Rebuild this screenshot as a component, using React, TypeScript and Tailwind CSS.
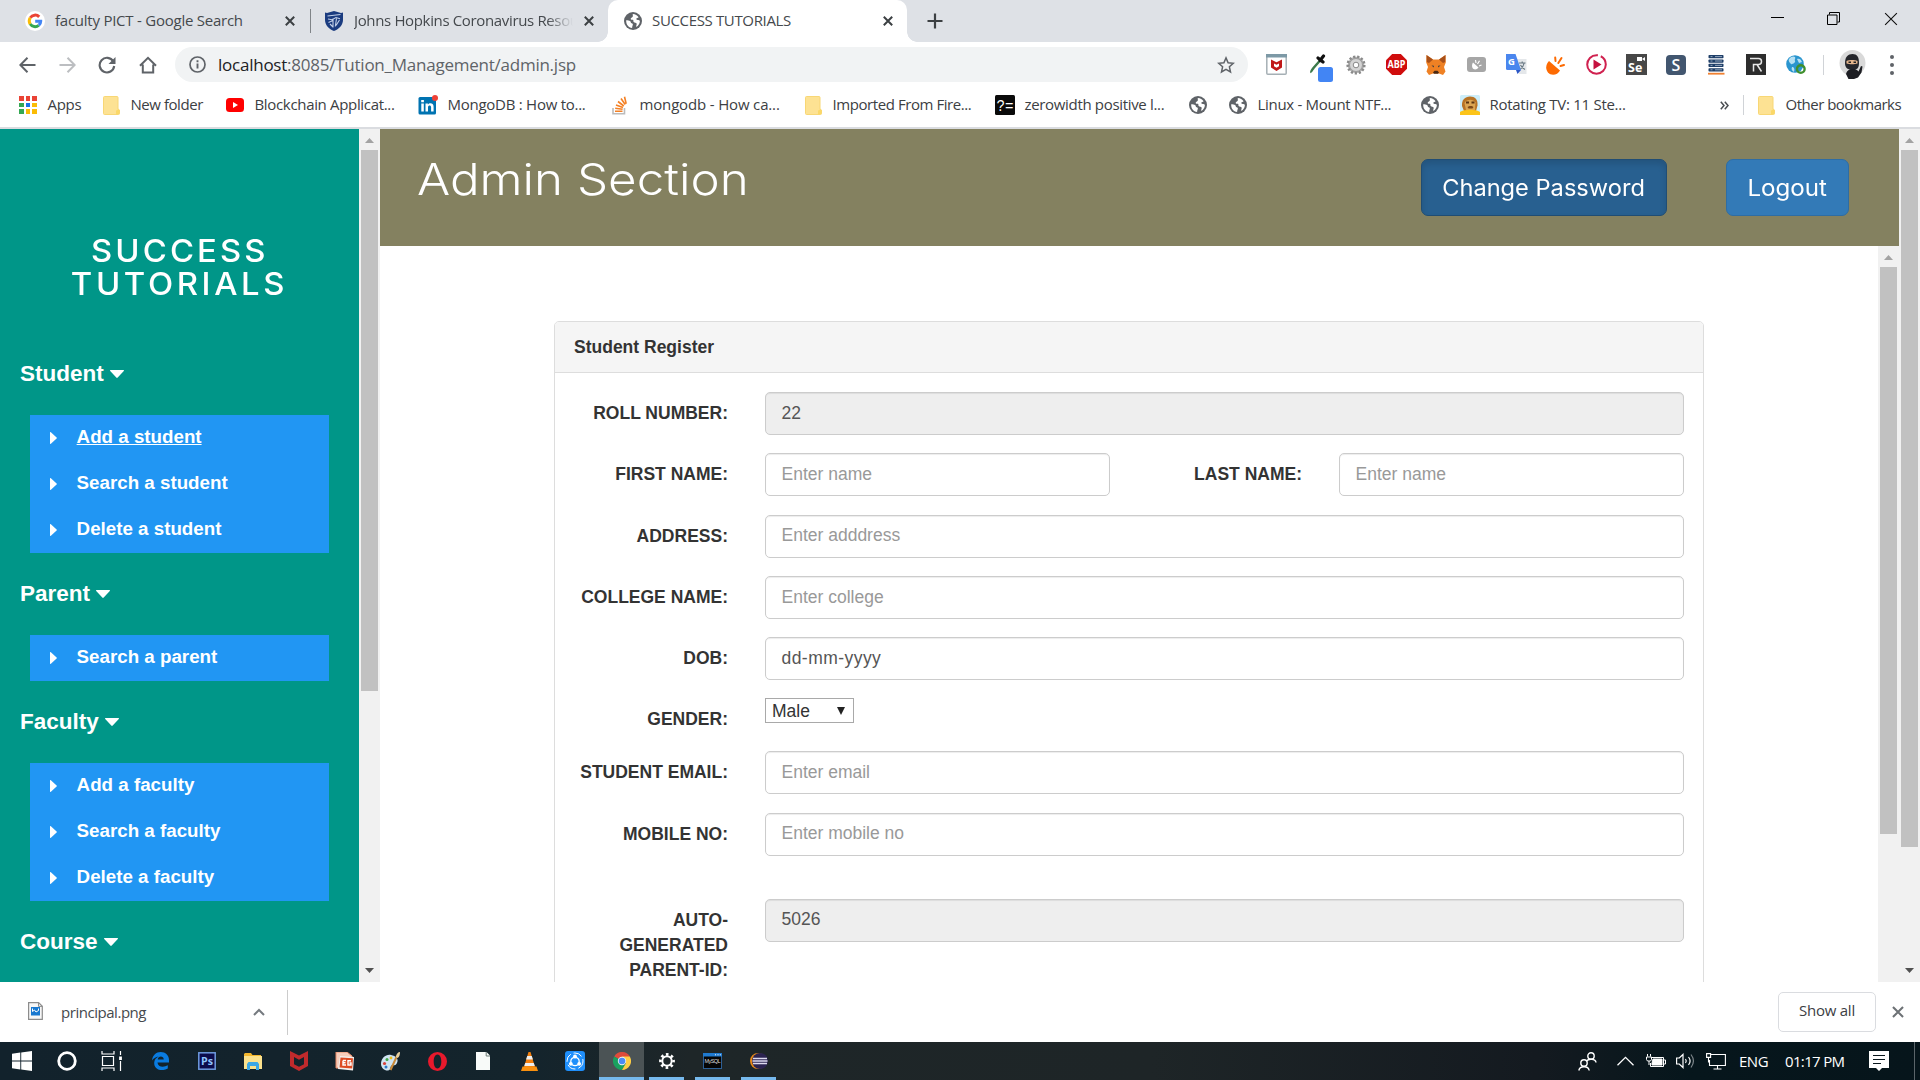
import React, { type ReactNode } from 'react';

/* ---------- browser chrome icons ---------- */

const Globe = ({ size = 18 }: { size?: number }) => (
  <svg width={size} height={size} viewBox="0 0 18 18">
    <circle cx="9" cy="9" r="9" fill="#5f6368" />
    <path
      d="M2.2 8.2C3.6 8.3 5.4 8.4 6.3 9.2c.8.8.2 1.6 1.4 2.1 1 .4 1.5.8 1 2-.4 1-.5 1.7-.6 2.6-3.600-.4-6.200-3.600-5.900-7.700zM8.800 2c2.600 0 4.600 1.300 5.800 3.200-.9.8-1.700.6-2.200 1.400-.4.8.3 1.300 1.300 1.400 1 .1 1.800.2 2.200.9-.1 2.700-1.600 4.900-3.600 6-.3-1.500.7-2.400.3-3.300-.5-1-2.100-.6-2.900-1.500-.7-.9.100-1.800-.7-2.300-.9-.5-2.200.1-2.300-.9-.1-1.100 1.500-1.200 2.100-2.300.4-.8-.3-1.500 0-2.600z"
      fill="#fff"
    />
  </svg>
);

const Cross = ({ size = 10, color = '#3c4043', w = 2 }: { size?: number; color?: string; w?: number }) => (
  <svg width={size} height={size} viewBox="0 0 10 10">
    <path d="M.8.8l8.400 8.400M9.200.8L.8 9.200" stroke={color} strokeWidth={w} />
  </svg>
);

const GoogleG = () => (
  <svg width="20" height="20" viewBox="0 0 20 20">
    <circle cx="10" cy="10" r="10" fill="#fff" />
    <g fill="none" strokeWidth="3">
      <path d="M5.300 6.700a5.700 5.700 0 0 1 8.900-.8" stroke="#ea4335" />
      <path d="M5.200 13.100a6 6 0 0 1 0-6.300" stroke="#fbbc05" />
      <path d="M5.200 13a5.700 5.700 0 0 0 8.500 1.300" stroke="#34a853" />
      <path d="M10.200 10.300h5.500c0 1.700-.6 3-1.900 4" stroke="#4285f4" />
    </g>
  </svg>
);

const Shield = () => (
  <svg width="18" height="20" viewBox="0 0 18 20">
    <path d="M0 1.500l2 .5 7-2 7 2 2-.5V9c0 5-4 9-9 11-5-2-9-6-9-11z" fill="#1b3c80" />
    <path d="M2.500 5l13-1.500M3 8l4 .7 4-2.200 4 1.200M3.500 11.500L8 9.500M8 7.500v9M11.500 7.500l-1.200 8M5 13l3 3M14.500 9l-3.500 5.500" stroke="#c3d0e8" strokeWidth="1.100" fill="none" />
  </svg>
);

const Back = ({ color }: { color: string }) => (
  <svg width="17" height="16" viewBox="0 0 17 16" fill="none" stroke={color} strokeWidth="2">
    <path d="M16.500 8H1.500M8.500.8L1.300 8l7.200 7.200" />
  </svg>
);

const Reload = () => (
  <svg width="18" height="18" viewBox="0 0 18 18">
    <path d="M15.300 5.500A7.300 7.300 0 1 0 16.200 10" fill="none" stroke="#5f6368" strokeWidth="2.100" />
    <path d="M17.500 1v7h-7z" fill="#5f6368" />
  </svg>
);

const Home = () => (
  <svg width="18" height="18" viewBox="0 0 18 18" fill="none" stroke="#5f6368" strokeWidth="2">
    <path d="M3.800 8.500v8h10.400v-8M1 9.800L9 1.800l8 8" />
  </svg>
);

const Info = () => (
  <svg width="17" height="17" viewBox="0 0 17 17" fill="none" stroke="#5f6368">
    <circle cx="8.500" cy="8.500" r="7.500" strokeWidth="1.700" />
    <path d="M8.500 7.500v5M8.500 4.300v1.900" strokeWidth="1.900" />
  </svg>
);

const Star = () => (
  <svg width="18" height="18" viewBox="0 0 18 18" fill="none" stroke="#5f6368" strokeWidth="1.500">
    <path d="M9 1.900l2.100 4.900 5.200.5-3.900 3.500 1.100 5.200L9 13.300 4.500 16l1.100-5.200L1.700 7.300l5.200-.5z" />
  </svg>
);

const Folder = () => (
  <svg width="17" height="19" viewBox="0 0 17 19">
    <path d="M1.500.5h12.500a1 1 0 0 1 1 1V13l1.500 1v3.500a1 1 0 0 1-1 1h-14a1 1 0 0 1-1-1v-16a1 1 0 0 1 1-1z" fill="#fde293" stroke="#f8d775" />
    <path d="M13 18.300v-3.500l2-1.500 1.400.8v4z" fill="#fbd867" />
  </svg>
);

const AppsGrid = () => (
  <div className="grid grid-cols-3 gap-[2px]">
    {['bg-[#ea4335]', 'bg-[#ea4335]', 'bg-[#ea4335]', 'bg-[#34a853]', 'bg-[#1a73e8]', 'bg-[#fbbc05]', 'bg-[#34a853]', 'bg-[#fbbc05]', 'bg-[#fbbc05]'].map((c, i) => (
      <span key={i} className={`size-[4.400px] ${c}`} />
    ))}
  </div>
);

const YouTube = () => (
  <svg width="18" height="14" viewBox="0 0 18 14">
    <rect width="18" height="14" rx="3.500" fill="#f00" />
    <path d="M7 4v6l5-3z" fill="#fff" />
  </svg>
);

const LinkedIn = () => (
  <svg width="20" height="20" viewBox="0 0 20 20">
    <rect x=".5" y="2" width="17.500" height="17.500" rx="1.500" fill="#0073b1" />
    <path d="M3.300 8.500h2.500v8H3.300zM3.200 5h2.700v2.300H3.200zM7.500 8.500h2.400v1.200c1.400-2.200 5.700-1.800 5.700 2v4.800h-2.500v-4.300c0-2.400-3.100-2.200-3.100 0v4.300H7.500z" fill="#fff" />
    <circle cx="17" cy="3" r="3" fill="#ef4136" />
  </svg>
);

const StackOverflow = () => (
  <svg width="16" height="19" viewBox="0 0 16 19" fill="none">
    <path d="M1 12v5.700h11.500V12" stroke="#bcbbbb" strokeWidth="1.600" />
    <path d="M3 15.300h7.500M3.200 12.200l7.400 1M4 9l7 2.500M6 5.500l5.800 4.500M9 2.500l4.200 6M12.500.8l1.700 7" stroke="#f48024" strokeWidth="1.600" />
  </svg>
);

const QuestionEq = () => (
  <svg width="20" height="20" viewBox="0 0 20 20">
    <rect width="20" height="20" rx="1.500" fill="#0a0a0a" />
    <text x="1.500" y="15.500" fontSize="17" fontFamily="Liberation Mono" fill="#fff" textLength="17" lengthAdjust="spacingAndGlyphs">?=</text>
  </svg>
);

const Lion = () => (
  <svg width="20" height="20" viewBox="0 0 20 20">
    <rect width="20" height="20" rx="1.500" fill="#cdeefa" />
    <path d="M2 11c-.5-6 3-9.500 8-9.500s8 3 7.500 9L16 16H4z" fill="#b87325" />
    <path d="M4.500 8c2-4 9-4.500 11-.5L15 15H6z" fill="#dba552" />
    <path d="M6 7.500h3M11.500 7.500h3" stroke="#5c3510" strokeWidth="1.800" />
    <path d="M7.500 12c1.500-1.500 5-1.500 6 0l-1 1.500h-4z" fill="#7c4817" />
    <path d="M0 17c4-3 16-3 20 0v3H0z" fill="#fcc419" />
  </svg>
);

/* ---------- extension icons ---------- */

const McAfeeExt = () => (
  <svg width="21" height="21" viewBox="0 0 21 21">
    <rect x=".8" y=".8" width="19.400" height="19.400" rx="1" fill="#fff" stroke="#a6b0b5" strokeWidth="1.500" />
    <path d="M0 0h21v3.500H0z" fill="#7d99a6" />
    <path d="M5 5.500l5.500 2.700L16 5.500v8L10.500 17 5 13.500z" fill="#c01818" />
    <path d="M8 9.500l2.500 1.200L13 9.500v2.700l-2.500 1.500L8 12.200z" fill="#fff" />
  </svg>
);
const Dropper = () => (
  <svg width="24" height="28" viewBox="0 0 24 28">
    <path d="M2.500 18.500c-1-1 1-3 2-4.500l7-8" stroke="#3c7a4a" strokeWidth="2.400" fill="none" />
    <path d="M9 4l5 4M11 6.500L14.500 2" stroke="#111" strokeWidth="3.200" strokeLinecap="round" />
    <rect x="9" y="13" width="15" height="15" rx="2.500" fill="#4285f4" />
  </svg>
);
const GearExt = () => (
  <svg width="20" height="20" viewBox="0 0 20 20">
    <circle cx="10" cy="10" r="8.300" fill="#b5b5b5" stroke="#8a8a8a" strokeWidth="2.600" strokeDasharray="2.200 1.800" />
    <circle cx="10" cy="10" r="6.500" fill="#d4d4d4" stroke="#9a9a9a" />
    <circle cx="10" cy="10" r="2.800" fill="#fff" stroke="#888" />
  </svg>
);
const Abp = () => (
  <svg width="21" height="21" viewBox="0 0 21 21">
    <path d="M6.200 0h8.600L21 6.200v8.600L14.800 21H6.200L0 14.800V6.200z" fill="#d00d0d" />
    <text x="1.500" y="14.300" fontSize="10.500" fontWeight="700" fontFamily="Open Sans" fill="#fff" textLength="18" lengthAdjust="spacingAndGlyphs">ABP</text>
  </svg>
);
const Fox = () => (
  <svg width="20" height="20" viewBox="0 0 20 20">
    <path d="M.5 0L7 4.500h6L19.500 0l.3 7.500L18 12l1.500 4.500L17 20l-4-1.500H7L3 20 .5 16.500 2 12 .2 7.500z" fill="#ef8124" />
    <path d="M.5 0L7 4.500 3 8 .8 7zM19.500 0L13 4.500 17 8l2.200-1z" fill="#a8501a" />
    <path d="M5.500 10.500l2.300.3v1.800zM14.500 10.500l-2.300.3v1.800z" fill="#233447" />
    <path d="M7 17.500l1.500-1.700h3l1.500 1.700-1 1.300H8z" fill="#4a2a15" />
  </svg>
);
const GrayExt = () => (
  <svg width="19" height="15" viewBox="0 0 19 15">
    <rect width="19" height="15" rx="3" fill="#a6a6a6" />
    <path d="M6 5.500l5.500 5c-1.500 2.500-5 2.500-6 .5-.8-1.800-.5-4 .5-5.500z" fill="#fff" />
    <path d="M9 6L8.500 3M10.500 7l2-3.200M12 9l2.500-1" stroke="#fff" strokeWidth="1.200" />
  </svg>
);
const Translate = () => (
  <svg width="21" height="21" viewBox="0 0 21 21">
    <path d="M8 5h12.500v15H13z" fill="#e4e7ea" />
    <path d="M0 0h9.500l5.500 16H1.500A1.500 1.500 0 0 1 0 14.500z" fill="#4a86ee" />
    <path d="M10 16h5l-3.500 4z" fill="#2a56c6" />
    <text x="2" y="11" fontSize="9.500" fontWeight="700" fontFamily="Open Sans" fill="#fff">G</text>
    <path d="M13 9h6.500M16.200 7.500V9M18 9.500c-.5 2.500-2 4.500-3.500 5.500M14.500 11c1 2 2.500 3.500 4.500 4.500" stroke="#64757f" strokeWidth="1.100" fill="none" />
  </svg>
);
const OrangeExt = () => (
  <svg width="20" height="20" viewBox="0 0 20 20">
    <path d="M3 6L14 15.500c-2.500 5-9 5.500-12 2S0 9 3 6z" fill="#fd6a02" />
    <path d="M9.500 6L9.200 2.500M12.300 8l3.200-5M14.500 11l3.500-1" stroke="#fd6a02" strokeWidth="2" strokeLinecap="round" />
  </svg>
);
const PlayExt = () => (
  <svg width="21" height="21" viewBox="0 0 21 21">
    <circle cx="10.500" cy="10.500" r="9.300" fill="#fff" stroke="#d0214f" strokeWidth="2" strokeDasharray="45 3 20" />
    <path d="M7.500 5.500v10l8-5z" fill="#c5123f" />
  </svg>
);
const SeExt = () => (
  <svg width="21" height="21" viewBox="0 0 21 21">
    <rect width="21" height="21" fill="#474747" />
    <text x="2" y="18" fontSize="12.500" fontWeight="700" fontFamily="Open Sans" fill="#fff">Se</text>
    <path d="M11 3h5v4h-5zM16 5l3-2v4z" fill="#fff" />
  </svg>
);
const SExt = () => (
  <svg width="20" height="20" viewBox="0 0 20 20">
    <rect width="20" height="20" rx="4" fill="#42566f" />
    <text x="5.500" y="15.500" fontSize="16" fontWeight="600" fontFamily="Open Sans" fill="#fff">S</text>
  </svg>
);
const ServerExt = () => (
  <svg width="19" height="20" viewBox="0 0 19 20">
    {[0, 4.4, 8.8, 13.2].map((y) => (
      <g key={y}>
        <rect x="1.500" y={y} width="15" height="3.300" rx=".8" fill="#1f3f68" />
        <path d={`M3.500 ${y + 1.6}h2M8 ${y + 1.6}h7`} stroke="#aebfd2" strokeWidth=".8" />
      </g>
    ))}
    <path d="M1 18.700h16.500" stroke="#f08030" strokeWidth="1.800" />
  </svg>
);
const RExt = () => (
  <svg width="20" height="21" viewBox="0 0 20 21">
    <rect width="20" height="21" fill="#2d2d2d" />
    <path d="M4 4.500h8.500c4 0 4 6 0 6H7.500V17.500M11 10.500l4.500 7" stroke="#e6e6e6" strokeWidth="1.500" fill="none" />
  </svg>
);
const GlobeExt = () => (
  <svg width="20" height="19" viewBox="0 0 20 19">
    <circle cx="9" cy="9" r="8.800" fill="#2a95cf" />
    <path d="M3 4c2-3 5-3 6-2s-1 3 0 4-3 4-4 3-3-3-2-5zM11 4c2-1 4 0 5 3l-3 1zM6 12c2 0 3 2 2 5-2-1-3-3-2-5z" fill="#b6e0f3" />
    <circle cx="14.800" cy="14" r="3.800" fill="none" stroke="#3f8f2e" strokeWidth="2.400" />
  </svg>
);
const Ninja = () => (
  <svg width="27" height="29" viewBox="0 0 27 29">
    <circle cx="13.500" cy="13" r="13" fill="#d9d9d9" />
    <path d="M6 13c0-6 3-9 7.500-9S20 7 20 13c0 5-2 7-6.500 7S6 18 6 13z" fill="#25262b" />
    <path d="M7.500 11c3-1.200 8-1.200 11 0v2.500c-3 1-8 1-11 0z" fill="#e5b58c" />
    <path d="M9.500 12.200h2.500M14.500 12.200H17" stroke="#222" strokeWidth="1.500" />
    <path d="M7 24c1-4 4-5 7-5 2 0 4 .5 5.500 2.500L22 16l1.500.5-1 6-3.500 5-4 1.500H9.500z" fill="#1d1e23" />
  </svg>
);

/* ---------- browser chrome ---------- */

const Bookmark = ({ icon, label, w, track = 'tracking-[-0.3px]' }: { icon: ReactNode; label?: string; w: string; track?: string }) => (
  <div className={`flex shrink-0 items-center ${w}`}>
    <span className="flex w-5 shrink-0 justify-center">{icon}</span>
    {label && <span className={`ml-[9.500px] pb-[2px] whitespace-nowrap ${track}`}>{label}</span>}
  </div>
);

const TabStrip = () => (
  <div className="flex h-[42px] shrink-0 bg-[#dee1e6] text-[15px] text-[#45494d]">
    <div className="flex w-[310px] items-center pl-[25px]">
      <GoogleG />
      <span className="ml-[10px] w-[230px] pb-[2px] tracking-[-0.24px] whitespace-nowrap">faculty PICT - Google Search</span>
      <Cross />
    </div>
    <div className="mt-[9px] h-6 w-px bg-[#808488]" />
    <div className="flex w-[297px] items-center pl-[14px]">
      <Shield />
      <span className="ml-[11px] w-[219px] mask-r-from-88% pb-[2px] tracking-[-0.35px] whitespace-nowrap">Johns Hopkins Coronavirus Resou</span>
      <span className="ml-[11px] flex"><Cross /></span>
    </div>
    <div className="relative flex w-[299px] items-center rounded-t-[10px] bg-white pl-4">
      <span className="absolute bottom-0 -left-[10px] size-[10px] bg-[radial-gradient(circle_at_0_0,#dee1e6_9.500px,#fff_10px)]" />
      <span className="absolute -right-[10px] bottom-0 size-[10px] bg-[radial-gradient(circle_at_100%_0,#dee1e6_9.500px,#fff_10px)]" />
      <Globe />
      <span className="ml-[10px] w-[231px] pb-[2px] tracking-[-0.35px] whitespace-nowrap">SUCCESS TUTORIALS</span>
      <Cross />
    </div>
    <svg className="mt-[13px] ml-5" width="16" height="16" viewBox="0 0 16 16">
      <path d="M8 .5v15M.5 8h15" stroke="#3c4043" strokeWidth="2.200" />
    </svg>
    <div className="ml-auto flex items-start pt-3 pr-[22px]">
      <span className="mt-[5px] mr-[43px] h-px w-[13px] bg-black" />
      <svg className="mr-[44px]" width="13" height="13" viewBox="0 0 13 13" fill="none" stroke="#000">
        <path d="M.5 3h9.500v9.500H.5zM2.500 2.500v-2h10v9.500h-2" />
      </svg>
      <Cross size={14} color="#111" w={0.8} />
    </div>
  </div>
);

const extensions = [McAfeeExt, Dropper, GearExt, Abp, Fox, GrayExt, Translate, OrangeExt, PlayExt, SeExt, SExt, ServerExt, RExt, GlobeExt];

const Toolbar = () => (
  <div className="flex h-[45px] shrink-0 items-center">
    <div className="flex w-[175px] items-center gap-[22.500px] pl-[19px]">
      <Back color="#5f6368" />
      <span className="flex rotate-180"><Back color="#bcbec1" /></span>
      <Reload />
      <Home />
    </div>
    <div className="flex h-[35px] w-[1073px] items-center rounded-full bg-[#f1f3f4] pr-[13px] pl-[14px]">
      <Info />
      <span className="ml-3 text-[17px] tracking-[-0.24px] text-[#5f6368]">
        <span className="text-[#202124]">localhost</span>:8085/Tution_Management/admin.jsp
      </span>
      <span className="ml-auto"><Star /></span>
    </div>
    <div className="ml-[8px] flex">
      {extensions.map((Icon, i) => (
        <span key={i} className={`flex h-[30px] w-10 justify-center ${i === 1 ? 'items-start pt-[4px] pl-[9px]' : 'items-center'}`}>
          <Icon />
        </span>
      ))}
    </div>
    <div className="ml-[7px] h-5 w-px bg-[#d0d3d7]" />
    <span className="ml-[15px]"><Ninja /></span>
    <div className="ml-6 flex flex-col gap-1">
      <span className="size-[4px] rounded-full bg-[#5f6368]" />
      <span className="size-[4px] rounded-full bg-[#5f6368]" />
      <span className="size-[4px] rounded-full bg-[#5f6368]" />
    </div>
  </div>
);

const BookmarksBar = () => (
  <div className="flex h-[42px] shrink-0 items-center border-b-2 border-[#dadce0] pb-[4px] pl-[18px] text-[15px] text-[#3c4043]">
    <Bookmark icon={<AppsGrid />} label="Apps" w="w-[83px]" />
    <Bookmark icon={<Folder />} label="New folder" w="w-[124px]" track="tracking-[-0.45px]" />
    <Bookmark icon={<YouTube />} label="Blockchain Applicat..." w="w-[193px]" track="tracking-[-0.33px]" />
    <Bookmark icon={<LinkedIn />} label="MongoDB : How to..." w="w-[192px]" track="tracking-[-0.26px]" />
    <Bookmark icon={<StackOverflow />} label="mongodb - How ca..." w="w-[193px]" track="tracking-[-0.16px]" />
    <Bookmark icon={<Folder />} label="Imported From Fire..." w="w-[192px]" track="tracking-[-0.43px]" />
    <Bookmark icon={<QuestionEq />} label="zerowidth positive l..." w="w-[193px]" track="tracking-[-0.33px]" />
    <Bookmark icon={<Globe />} w="w-[40px]" />
    <Bookmark icon={<Globe />} label="Linux - Mount NTF..." w="w-[192px]" />
    <Bookmark icon={<Globe />} w="w-[40px]" />
    <Bookmark icon={<Lion />} label="Rotating TV: 11 Ste..." w="w-[260px]" track="tracking-[-0.28px]" />
    <svg width="9" height="9" viewBox="0 0 9 9" fill="none" stroke="#4a4e52" strokeWidth="1.500">
      <path d="M.8.8l3.200 3.700L.8 8.200M4.800.8L8 4.500 4.800 8.200" />
    </svg>
    <div className="ml-[14px] h-5 w-px bg-[#d0d3d7]" />
    <span className="ml-[12px]"><Bookmark icon={<Folder />} label="Other bookmarks" w="w-[160px]" track="tracking-[-0.5px]" /></span>
  </div>
);

/* ---------- page ---------- */

const Scrollbar = ({ thumb, down = true }: { thumb: string; down?: boolean }) => (
  <div className="flex w-[21px] shrink-0 flex-col items-center bg-[#f1f1f1]">
    <span className="flex h-[21px] items-center pt-[2px]">
      <svg width="9" height="5" viewBox="0 0 9 5"><path d="M0 5L4.500 0 9 5z" fill="#a3a3a3" /></svg>
    </span>
    <span className={`w-[17px] bg-[#c1c1c1] ${thumb}`} />
    {down && (
      <span className="mt-auto mb-[9px]">
        <svg className="block" width="9" height="5" viewBox="0 0 9 5"><path d="M0 0l4.500 5L9 0z" fill="#505050" /></svg>
      </span>
    )}
  </div>
);

const MenuHeading = ({ children }: { children: string }) => (
  <div className="flex h-[82px] items-center pb-px pl-5 text-[22.500px] font-bold">
    {children}
    <svg className="ml-[6px]" width="14" height="8" viewBox="0 0 14 8">
      <path d="M.6 0h12.800c.6 0 .8.6.4 1L7.700 7.600c-.4.4-1 .4-1.400 0L.2 1C-.2.600 0 0 .6 0z" fill="#fff" />
    </svg>
  </div>
);

const MenuItems = ({ items }: { items: string[] }) => (
  <ul className="ml-[30px] w-[299px] bg-[#2196f3] text-[18.750px] font-bold">
    {items.map((t) => (
      <li key={t} className="flex h-[46px] items-center pb-px pl-5">
        <svg width="7" height="12" viewBox="0 0 7 12"><path d="M0 .6v10.800c0 .6.500.7.900.4L6.600 6.500c.4-.4.400-.7 0-1L.9.200C.5-.1 0 0 0 .6z" fill="#fff" /></svg>
        <span className={`ml-[19.600px] ${t === 'Add a student' ? 'underline decoration-1 underline-offset-1' : ''}`}>{t}</span>
      </li>
    ))}
  </ul>
);

const Sidebar = () => (
  <aside className="w-[359px] shrink-0 overflow-hidden bg-[#009688] font-['Liberation_Sans',sans-serif] text-white">
    <div className="flex h-[204px] flex-col items-center pt-[105px] font-[Inter,sans-serif] text-[31px] leading-[33px] font-medium">
      <span className="scale-x-[1.06] pl-px tracking-[2.900px]">SUCCESS</span>
      <span className="scale-x-[1.06] tracking-[3.400px]">TUTORIALS</span>
    </div>
    <MenuHeading>Student</MenuHeading>
    <MenuItems items={['Add a student', 'Search a student', 'Delete a student']} />
    <MenuHeading>Parent</MenuHeading>
    <MenuItems items={['Search a parent']} />
    <MenuHeading>Faculty</MenuHeading>
    <MenuItems items={['Add a faculty', 'Search a faculty', 'Delete a faculty']} />
    <MenuHeading>Course</MenuHeading>
  </aside>
);

const Header = () => (
  <header className="flex h-[117px] shrink-0 items-start bg-[#848160] pr-[50px] pl-[37px] font-[Inter,sans-serif] text-white">
    <h1 className="mt-[22px] origin-left scale-x-[1.12] text-[44px] leading-[56px] font-light">Admin Section</h1>
    <button className="mt-[30px] ml-auto h-[57px] w-[246px] rounded-[7px] border border-[#204d74] bg-[#286090] text-[22.500px] shadow-[inset_0_4px_6px_rgba(0,0,0,0.125)]">
      <span className="inline-block scale-x-[1.050]">Change Password</span>
    </button>
    <button className="mt-[30px] ml-[59px] h-[57px] w-[123px] rounded-[7px] border border-[#2e6da4] bg-[#337ab7] text-[22.500px]">
      <span className="inline-block scale-x-[1.070]">Logout</span>
    </button>
  </header>
);

const Label = ({ children, w = 'w-[154px]' }: { children: ReactNode; w?: string }) => (
  <div className={`${w} shrink-0 pt-[9px] text-right leading-[25px] font-bold text-[#333]`}>{children}</div>
);

const Field = ({ text, filled = false, w = 'w-[919px]', color = 'text-[#999]' }: { text: string; filled?: boolean; w?: string; color?: string }) => (
  <div className={`${w} flex h-[43px] shrink-0 items-center rounded-[5px] border border-[#ccc] pb-px pl-[15.500px] shadow-[inset_0_1px_1px_rgba(0,0,0,0.075)] ${filled ? 'bg-[#eee]' : 'bg-white'} ${color}`}>
    {text}
  </div>
);

const Row = ({ label, h = 'h-[61.250px]', children }: { label: ReactNode; h?: string; children: ReactNode }) => (
  <div className={`flex shrink-0 items-start gap-[37px] ${h}`}>
    <Label>{label}</Label>
    {children}
  </div>
);

const Form = () => (
  <div className="mt-[75px] ml-[174px] flex h-[700px] w-[1150px] flex-col rounded-t-[5px] border border-[#ddd] bg-white text-[17.500px]">
    <div className="flex h-[51px] shrink-0 items-center rounded-t-[4px] border-b border-[#ddd] bg-[#f5f5f5] pl-[19px] font-bold text-[#333]">Student Register</div>
    <div className="flex flex-col pt-[19px] pl-[19px]">
      <Row label="ROLL NUMBER:"><Field text="22" filled color="text-[#555]" /></Row>
      <Row label="FIRST NAME:">
        <Field text="Enter name" w="w-[345px]" />
        <Label w="w-[155px]">LAST NAME:</Label>
        <Field text="Enter name" w="w-[345px]" />
      </Row>
      <Row label="ADDRESS:"><Field text="Enter adddress" /></Row>
      <Row label="COLLEGE NAME:"><Field text="Enter college" /></Row>
      <Row label="DOB:"><Field text="dd-mm-yyyy" color="text-[#555] tracking-[0.450px]" /></Row>
      <Row label="GENDER:" h="h-[53px]">
        <div className="flex h-[25px] w-[89px] items-center justify-between border border-[#a9a9a9] bg-white pr-[8px] pl-[6px] text-[#333]">
          Male
          <svg width="8" height="8" viewBox="0 0 8 8"><path d="M0 0h8L4 8z" fill="#222" /></svg>
        </div>
      </Row>
      <Row label="STUDENT EMAIL:"><Field text="Enter email" /></Row>
      <Row label="MOBILE NO:" h="h-[86px]"><Field text="Enter mobile no" /></Row>
      <Row label={<>AUTO-<br />GENERATED<br />PARENT-ID:</>} h="h-[90px]"><Field text="5026" filled color="text-[#555]" /></Row>
    </div>
  </div>
);

/* ---------- downloads and taskbar ---------- */

const DownloadBar = () => (
  <div className="flex h-[60px] shrink-0 items-center bg-white text-[15px] text-[#45494d]">
    <div className="flex h-[45px] w-[288px] items-center border-r border-[#ccc] pl-7">
      <svg className="-mt-[3px]" width="15" height="18" viewBox="0 0 15 18">
        <path d="M.6.6h10l3.700 3.700v13.100H.6z" fill="#f7f7f7" stroke="#8c8c8c" strokeWidth="1.200" />
        <path d="M10.500.6v3.800h3.800" fill="none" stroke="#8c8c8c" />
        <rect x="3" y="5" width="9" height="8.500" fill="#1878d0" />
        <path d="M4.500 6.500v3L6.500 8 8 10l2.500-1.500v-2" fill="none" stroke="#fff" />
      </svg>
      <span className="ml-[18px] w-[192px] pt-px tracking-[-0.460px]">principal.png</span>
      <svg width="12" height="8" viewBox="0 0 12 8" fill="none" stroke="#757a7f" strokeWidth="2"><path d="M1 7l5-5 5 5" /></svg>
    </div>
    <div className="mr-[16px] ml-auto flex h-10 w-[98px] items-center justify-center rounded-[5px] border border-[#dadce0] pb-[3px] tracking-[-0.250px] text-[#3c4043]">Show all</div>
    <span className="mr-[16px] flex"><Cross size={12} color="#6d7175" w={1.7} /></span>
  </div>
);

const TaskSlot = ({ w, children }: { w: string; children: ReactNode }) => (
  <span className={`flex h-full shrink-0 items-center justify-center ${w}`}>{children}</span>
);

const RunningSlot = ({ m, children }: { m: string; children: ReactNode }) => (
  <span className={`flex h-full w-[35px] shrink-0 items-center justify-center border-b-[3px] border-[#76b9ed] pt-[3px] ${m}`}>{children}</span>
);

const Taskbar = () => (
  <div className="flex h-[38px] shrink-0 items-center bg-[linear-gradient(90deg,#12222c_0%,#14242c_28%,#1e2628_36%,#1e2527_60%,#141a20_80%,#06161c_88%,#06151b_100%)] text-white">
    <TaskSlot w="w-[44px]">
      <svg width="20" height="20" viewBox="0 0 20 20" fill="#fff"><path d="M0 2.800l8.300-1.200v8H0zM9.200 1.500L20 0v9.600H9.200zM0 10.500h8.300v8L0 17.300zM9.200 10.500H20V20L9.200 18.600z" /></svg>
    </TaskSlot>
    <TaskSlot w="w-[46px]">
      <svg width="20" height="20" viewBox="0 0 20 20"><circle cx="10" cy="10" r="8.300" fill="none" stroke="#fff" strokeWidth="2.800" /></svg>
    </TaskSlot>
    <TaskSlot w="w-[44px]">
      <svg width="22" height="20" viewBox="0 0 22 20" fill="none" stroke="#fff" strokeWidth="1.200">
        <path d="M1.500 5.500h11v9h-11zM1 0v3h12V0M1 20v-3h12v3M19.500 0v4M19.500 10v10" />
        <path d="M19.500 5.500V9" strokeWidth="2.800" />
      </svg>
    </TaskSlot>
    <TaskSlot w="w-[53px]">
      <svg width="17" height="18" viewBox="0 0 17 18"><path d="M0 8.500C.8 3 4 0 8.700 0 13.500 0 17 3.500 17 8v2.500H5.500c.2 4.500 6 5.300 10.300 2.800v3.300C9 20 2 17.500 2.200 10.800 2.300 8 4 5.800 6.500 4.500 3.500 5 1.500 6.500 0 8.500zm5.700-1h6c.2-4-5.700-4-6 0z" fill="#0a7be0" /></svg>
    </TaskSlot>
    <TaskSlot w="w-[40px]">
      <svg width="18" height="18" viewBox="0 0 18 18">
        <rect x=".8" y=".8" width="16.400" height="16.400" fill="#0c0c4c" stroke="#6f9be0" strokeWidth="1.500" />
        <text x="3" y="12.500" fontSize="10" fontWeight="700" fontFamily="Open Sans" fill="#8fc6ff" textLength="12" lengthAdjust="spacingAndGlyphs">Ps</text>
      </svg>
    </TaskSlot>
    <TaskSlot w="w-[52px]">
      <svg width="18" height="17" viewBox="0 0 18 17">
        <path d="M0 1l1-1h6l1.500 2H17v4H0z" fill="#f3b62d" /><path d="M0 3h18v13H0z" fill="#fbe18c" />
        <path d="M3 17v-6l1.500-2h9L15 11v6h-3v-4H6v4z" fill="#3ba7e5" />
      </svg>
    </TaskSlot>
    <TaskSlot w="w-[40px]">
      <svg width="18" height="20" viewBox="0 0 18 20"><path d="M0 0l9 4.500L18 0v15l-9 5-9-5zM4 6v7.300l5 2.500 5-2.500V6L9 8.800z" fill="#c02a2c" fillRule="evenodd" /></svg>
    </TaskSlot>
    <TaskSlot w="w-[52px]">
      <svg width="20" height="19" viewBox="0 0 20 19">
        <path d="M1 0h11l5 4v12H1z" fill="#f6cdbb" stroke="#e88a66" />
        <path d="M5 4l14 1-1 13.500L3 17z" fill="#f3f0ee" />
        <path d="M5.500 5.500l12.500.7-.8 10.300L4.500 15.500z" fill="#dd4a22" />
        <path d="M8 8.500h3M8 8.500v4.500h3M8 10.700h2.500M16 8.700h-3V13h3v-2h-1.500" stroke="#fff" strokeWidth="1.400" fill="none" />
      </svg>
    </TaskSlot>
    <TaskSlot w="w-[39px]">
      <svg width="20" height="19" viewBox="0 0 20 19">
        <path d="M0 12C0 6 5 2 10 3s8 4 6 8-5 1-6 3 0 4-3 4.500S0 16 0 12z" fill="#cfe4f2" />
        <circle cx="3.500" cy="11.500" r="1.600" fill="#d8413b" /><circle cx="6" cy="7.500" r="1.500" fill="#3fa747" /><circle cx="10" cy="6" r="1.400" fill="#e9bd1c" /><circle cx="5" cy="15" r="1.500" fill="#2d79c9" />
        <path d="M9.500 18L16 4" stroke="#c88938" strokeWidth="2" /><path d="M15 5c0-3 2-5 4-5 0 2-.500 5-2.500 6z" fill="#e7cf9c" />
      </svg>
    </TaskSlot>
    <TaskSlot w="w-[54px]">
      <svg width="19" height="19" viewBox="0 0 19 19"><path d="M9.500 0a9.500 9.500 0 1 0 0 19 9.500 9.500 0 1 0 0-19zm0 2.500c2.400 0 3.800 3 3.800 7s-1.400 7-3.800 7-3.800-3-3.800-7 1.400-7 3.800-7z" fill="#e8192c" /></svg>
    </TaskSlot>
    <TaskSlot w="w-[38px]">
      <svg width="14" height="18" viewBox="0 0 14 18"><path d="M0 0h10.500L14 3.500V18H0z" fill="#f8faf9" /><path d="M10.200 0v4H14" fill="none" stroke="#6a7a76" /></svg>
    </TaskSlot>
    <TaskSlot w="w-[54px]">
      <svg width="17" height="19" viewBox="0 0 17 19">
        <path d="M7.500 0h2L14 15H3z" fill="#f47f0d" /><path d="M6.200 4h4.600l1.100 3.500H5.100zM4.200 11h8.600l1 3H3.300z" fill="#eee" />
        <path d="M1.500 14.500h14L17 19H0z" fill="#f9900f" />
      </svg>
    </TaskSlot>
    <TaskSlot w="w-[38px]">
      <svg width="20" height="20" viewBox="0 0 20 20">
        <rect width="20" height="20" rx="3" fill="#1f8ffb" />
        <circle cx="10" cy="10" r="8" fill="none" stroke="#fff" strokeDasharray="9 3" /><circle cx="10" cy="10.500" r="4.200" fill="none" stroke="#fff" strokeWidth="1.300" />
        <circle cx="10" cy="5.500" r="1.900" fill="#fff" /><circle cx="5.800" cy="12.800" r="1.900" fill="#fff" /><circle cx="14.200" cy="12.800" r="1.900" fill="#fff" />
      </svg>
    </TaskSlot>
    <span className="ml-[5px] flex h-full w-[45px] items-center justify-center border-b-[3px] border-[#76b9ed] bg-[#4b5355] pt-[3px]">
      <svg width="18" height="18" viewBox="0 0 18 18">
        <path d="M9 9L1.200 4.500A9 9 0 0 1 16.800 4.500z" fill="#de4b3c" />
        <path d="M9 9L1.200 4.500A9 9 0 0 0 9 18l3.900-6.750z" fill="#19a15f" />
        <path d="M9 4.500h7.800A9 9 0 0 1 9 18l3.900-6.750z" fill="#ffce44" />
        <circle cx="9" cy="9" r="4.200" fill="#f1f1f1" /><circle cx="9" cy="9" r="3.300" fill="#4c8bf5" />
      </svg>
    </span>
    <RunningSlot m="ml-[5px]">
      <svg width="16" height="16" viewBox="0 0 16 16" fill="none" stroke="#fff">
        <circle cx="8" cy="8" r="4.700" strokeWidth="2" />
        <circle cx="8" cy="8" r="6.600" strokeWidth="2.600" strokeDasharray="2.600 2.583" strokeDashoffset="1.300" />
      </svg>
    </RunningSlot>
    <RunningSlot m="ml-[11px]">
      <svg width="19" height="16" viewBox="0 0 19 16">
        <rect x=".5" y=".5" width="18" height="15" fill="#050505" stroke="#2d5f95" /><path d="M0 0h19v3.500H0z" fill="#1f7ad0" />
        <path d="M12 1.800h1M14.500 1.800h1M16.800 1.800h1" stroke="#fff" />
        <text x="1.500" y="9.500" fontSize="5.500" fontFamily="Liberation Sans" fill="#ddd" textLength="16">MySQL</text>
      </svg>
    </RunningSlot>
    <RunningSlot m="ml-[11px]">
      <svg width="18" height="16" viewBox="0 0 18 16">
        <circle cx="8" cy="8" r="8" fill="#e88a1a" /><circle cx="10" cy="8" r="8" fill="#2b2350" />
        <path d="M3 5.500h14M2.500 8h15M3 10.500h14" stroke="#dcd9ee" strokeWidth="1.500" />
      </svg>
    </RunningSlot>
    <svg className="ml-auto shrink-0" width="19" height="19" viewBox="0 0 19 19" fill="none" stroke="#fff" strokeWidth="1.400">
      <circle cx="13" cy="4" r="3.200" /><path d="M8.500 9c2-2.600 9-2.600 9.500 1.500" /><circle cx="6" cy="11" r="3.200" /><path d="M.8 18.500c1-5 9.500-5 10.400 0" />
    </svg>
    <svg className="ml-[20px] shrink-0" width="17" height="10" viewBox="0 0 17 10" fill="none" stroke="#fff" strokeWidth="1.300"><path d="M.5 9.300l8-8 8 8" /></svg>
    <svg className="ml-[12px] shrink-0" width="20" height="14" viewBox="0 0 20 14" fill="none" stroke="#fff">
      <path d="M6 3.500h11.500v9H4.500V9M18 6h1.500v4H18" /><path d="M7 5h9v6H6V9z" fill="#fff" /><path d="M1.500 0v2.500M4.500 0v2.500M.5 3h5v2.500l-1 1.500h-3l-1-1.500zM3 7v4" />
    </svg>
    <svg className="ml-[10px] shrink-0" width="20" height="18" viewBox="0 0 20 18" fill="none" stroke="#fff" strokeWidth="1.200">
      <path d="M.6 6h2.700L7 2.500v13L3.300 12H.6zM9.500 7c1 1.300 1 2.700 0 4M12.500 5c2 2.500 2 5.500 0 8" /><path d="M15 2.500c3 4 3 9 0 13" stroke="#7d868a" />
    </svg>
    <svg className="ml-[10px] shrink-0" width="20" height="17" viewBox="0 0 20 17" fill="none" stroke="#fff" strokeWidth="1.100">
      <path d="M5 1.500h14.400v11H3.500V7M11.500 12.500v3.500M7.500 16h8M.6.6h4v3.800h-4zM2.500 4.500V9h1" />
    </svg>
    <span className="ml-[13px] w-[46px] text-[15px] tracking-[-0.500px]">ENG</span>
    <span className="w-[84px] text-[15px] tracking-[-0.650px]">01:17 PM</span>
    <svg className="shrink-0" width="20" height="20" viewBox="0 0 20 20">
      <path d="M0 0h20v17h-7l-3 3-3-3H0z" fill="#fff" /><path d="M4 4.500h12M4 8.500h12M4 12.500h8" stroke="#0a171d" strokeWidth="1.200" />
    </svg>
    <span className="mr-[5px] ml-[25px] h-full w-px bg-[#5b656a]" />
  </div>
);

export default function App() {
  return (
    <div className="flex h-[1080px] w-[1920px] flex-col overflow-hidden bg-white font-['Open_Sans',sans-serif]">
      <TabStrip />
      <Toolbar />
      <BookmarksBar />
      <main className="flex h-[853px] shrink-0 overflow-hidden font-['Liberation_Sans',sans-serif]">
        <Sidebar />
        <Scrollbar thumb="h-[541px]" />
        <div className="flex w-[1519px] shrink-0 flex-col">
          <Header />
          <div className="flex h-[736px] overflow-hidden">
            <div className="w-[1498px] shrink-0 overflow-hidden"><Form /></div>
            <Scrollbar thumb="h-[567px]" down={false} />
          </div>
        </div>
        <Scrollbar thumb="h-[697px]" />
      </main>
      <DownloadBar />
      <Taskbar />
    </div>
  );
}
